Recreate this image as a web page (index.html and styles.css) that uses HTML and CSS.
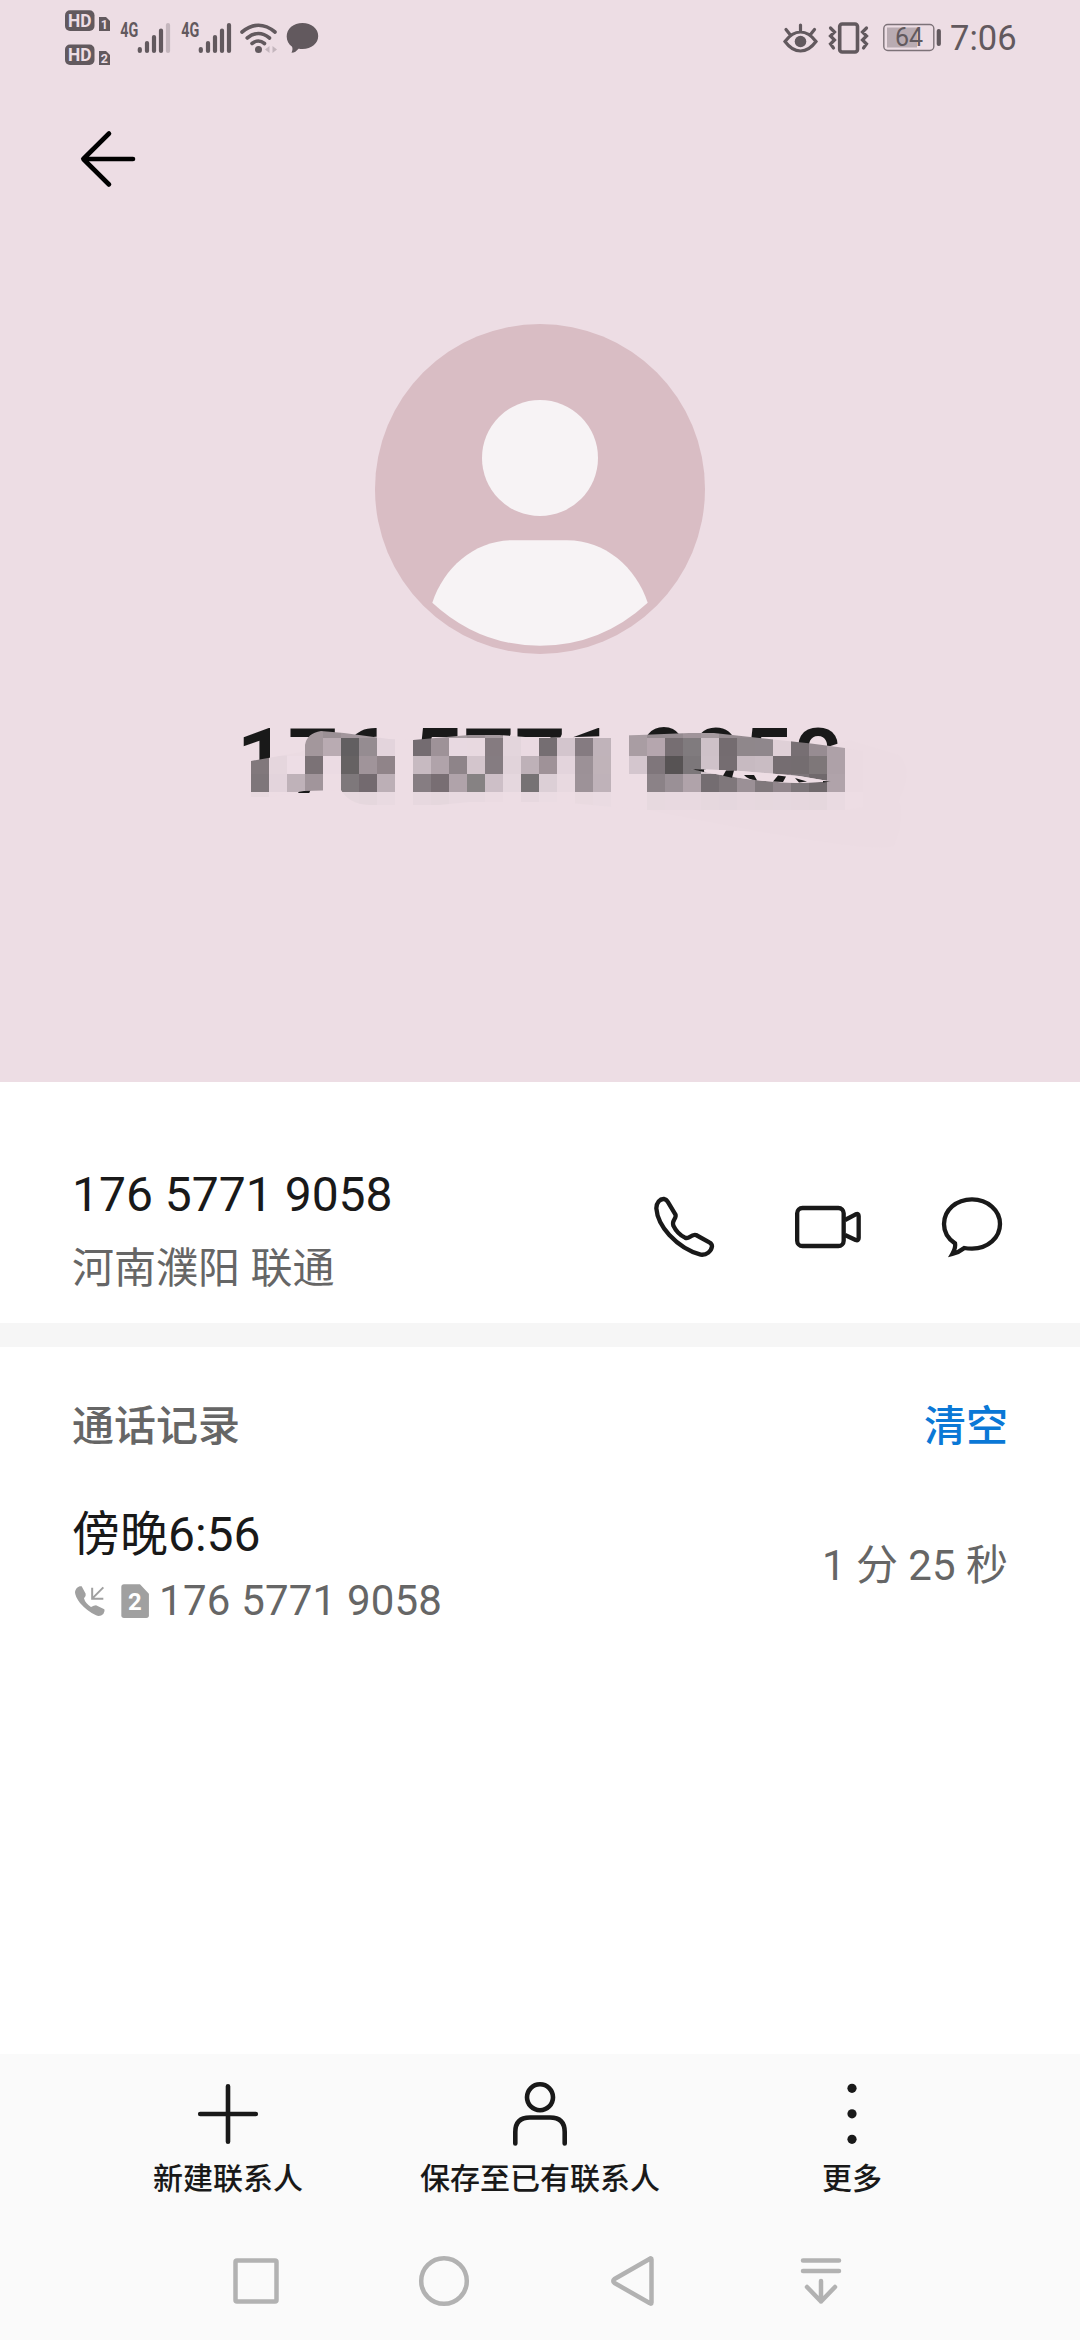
FILE: index.html
```html
<!DOCTYPE html>
<html lang="zh-CN">
<head>
<meta charset="utf-8">
<title>联系人</title>
<link rel="stylesheet" href="styles.css">
</head>
<body>
<div class="screen">
  <header class="hero">
    <div class="status">
      <svg class="hd" viewBox="65 10 46 56" width="46" height="56">
        <g fill="#62595e">
          <rect x="65" y="10.3" width="29.5" height="20.7" rx="5"/>
          <rect x="65" y="44.5" width="29.5" height="20.5" rx="5"/>
          <path d="M99 17h7l4 4v10H99zM99 51h7l4 4v10H99z"/>
        </g>
        <g class="hd-text">
          <text x="68" y="27" textLength="23.5" lengthAdjust="spacingAndGlyphs">HD</text>
          <text x="68" y="61.2" textLength="23.5" lengthAdjust="spacingAndGlyphs">HD</text>
        </g>
        <g class="hd-num"><text x="104.3" y="28.6">1</text><text x="104.3" y="62.8">2</text></g>
      </svg>
      <svg class="signal" viewBox="120 14 52 46" width="52" height="46">
        <text class="net" x="120.3" y="35.8" textLength="18" lengthAdjust="spacingAndGlyphs">4G</text>
        <g class="bars"><path d="M139.8 48v2M147 42v8M154 36v14M161 29.500v20.500"/><path class="off" d="M168 24v26"/></g>
      </svg>
      <svg class="signal" viewBox="120 14 52 46" width="52" height="46">
        <text class="net" x="120.3" y="35.8" textLength="18" lengthAdjust="spacingAndGlyphs">4G</text>
        <g class="bars"><path d="M139.8 48v2M147 42v8M154 36v14M161 29.500v20.500M168 24v26"/></g>
      </svg>
      <svg class="wifi" viewBox="239 20 40 34" width="40" height="34">
        <g fill="none" stroke="#62595e" stroke-width="3.600" stroke-linecap="round"><path d="M242 31Q258.500 17.500 275 31M247.200 37Q258.500 28 269.500 37M252 42.500Q258.500 37.500 264.500 42.500"/></g>
        <circle cx="258.500" cy="48.600" r="3.500" fill="#62595e"/>
        <path d="M269.500 45v7l-4.500-3.500zM272.500 45v7l4.500-3.500z" fill="#c4b6bd"/>
      </svg>
      <svg class="msg" viewBox="286 22 34 32" width="34" height="32"><path d="M302.500 23c9 0 15.700 5.600 15.700 13S311.500 49 302.500 49c-2 0-2.800-.2-4-.3-2 2.300-3.800 4-7 4.100 1-2 1.300-4 .6-6-3.500-2.300-5.400-6-5.400-10.200C286.700 28.600 293.500 23 302.500 23z" fill="#62595e"/></svg>
      <svg class="eye" viewBox="783 21 36 32" width="36" height="32">
        <g fill="none" stroke="#62595e" stroke-width="3.200" stroke-linecap="round"><path d="M785 40.500Q792 31 800.500 31T816 40.500Q809 50 800.500 50T785 40.500zM800.500 24v6M786 28.500l4 5M814.500 28.500l-4 5"/></g>
        <circle cx="800.500" cy="40.500" r="5.800" fill="#62595e"/>
      </svg>
      <svg class="vibe" viewBox="828 20 42 34" width="42" height="34">
        <g fill="none" stroke="#62595e"><rect x="839.700" y="23" width="17.800" height="28" rx="2.500" stroke-width="3.600"/><path d="M830.500 27l4 4-4 4 4 4-4 4 3 4M866.500 27l-4 4 4 4-4 4 4 4-3 4" stroke-width="3.200" stroke-linecap="round"/></g>
      </svg>
      <svg class="battery" viewBox="882 17 60 42" width="60" height="42">
        <rect x="883.800" y="24.500" width="50" height="26" rx="4" fill="none" stroke="#7d7278" stroke-width="1.400"/>
        <rect x="887" y="27.500" width="30" height="20" fill="#b9abb2"/>
        <rect x="936.700" y="29" width="4.200" height="17" rx="2" fill="#62595e"/>
        <text x="909" y="46" class="battery-text">64</text>
      </svg>
      <span class="clock">7:06</span>
    </div>

    <svg class="back" viewBox="76 127 64 64" width="64" height="64"><path d="M109 133.500L83.300 159 109 184.500M84 159h49"/></svg>

    <svg class="avatar" viewBox="375 324 330 330" width="330" height="330">
      <circle cx="540" cy="489" r="165" fill="#d9bdc4"/>
      <circle cx="540" cy="458" r="58" fill="#f7f3f5"/>
      <path d="M432.300 602.700C444 567 475 540.200 513 540.200H567C605 540.200 636 567 647.700 602.700Q601 645.700 540 645.700T432.300 602.700z" fill="#f7f3f5"/>
    </svg>

    <div class="name">
      <span>176 5771 9058</span>
      <svg class="mosaic" viewBox="230 710 700 130" width="700" height="130">
        <defs>
          <clipPath id="brush"><path clip-rule="evenodd" d="M238 775Q240 763 252 761L300 752.500 306 750V745Q308 733 322 731L345 733 390 739 414 740 470 735H500L540 738 577 737 640 735 690 733H715L770 739 812 743.500 846 748 870 752Q912 758 912 785T870 806L846 810H648L560 802H470L440 805H370Q350 804 342 790L305 791 270 797H252zM692 769L735 770.500 800 776 832 781.500 800 783Q750 782 692 769z"/></clipPath>
        </defs>
        <path d="M640 808L850 740 900 755Q915 770 900 800 906 820 895 846Q870 855 640 808z" fill="#ecdce3"/>
        <g id="cells" clip-path="url(#brush)"></g>
        <path d="M692 769L735 770.500 800 776 832 781.500 800 783Q750 782 692 769z" fill="#eddde4"/>
        <path d="M692 769l13 .5V772zM727 770.500h8l-2 7.200-9-2zM745 775h10l3 5.200q-9-.2-13-5.200zM779 775.500l8 1-3 5.500-10-.5zM796 778l12 3.500-8 1-4-4.500zM824 781l8 .5-8 1z" fill="#191919"/>
      </svg>
    </div>
  </header>

  <section class="number">
    <div>
      <div class="primary">176 5771 9058</div>
      <div class="secondary place">河南濮阳 联通</div>
    </div>
    <div class="actions">
      <svg viewBox="54 63 216 216" width="72" height="72"><path d="M79 115C79 98 90 86 102 87Q109 88 113 95L136 133Q139 139 133 148 127 157 130 167 142 192 165 203 172 206 179 201 190 193 198 195L238 217Q246 221 246 229C244 244 230 256 212 254Q160 240 118 195 82 155 79 115z"/></svg>
      <svg viewBox="486 63 216 216" width="72" height="72"><rect x="501.500" y="114" width="139.500" height="114" rx="16"/><path d="M645 150L677 133Q686 129 686 138V204Q686 213 677 210L645 195"/></svg>
      <svg viewBox="918 63 216 216" width="72" height="72"><path stroke-linejoin="miter" d="M1003 234Q1012 236 1026 236C1074 236 1110 203 1110 162S1073 88 1026 88 942 120 942 162C942 187 955 207 975 220Q978 233 967 252 985 248 1003 234z"/></svg>
    </div>
  </section>

  <section class="log">
    <div class="log-head"><span>通话记录</span><span class="clear">清空</span></div>
    <div class="call">
      <div>
        <div class="primary when">傍晚6:56</div>
        <div class="secondary detail">
          <svg viewBox="66 810 108 108" width="36" height="36"><path d="M75 838C76 826 86 818 95 820L107 842Q109 848 102 856 105 870 123 882 132 878 138 877L163 889Q166 895 160 903 150 912 138 907 112 895 90 870 75 850 75 838z" fill="#a0a0a0"/><path d="M126.500 824V857H160M127 856L160 823" fill="none" stroke="#a0a0a0" stroke-width="6"/></svg>
          <svg class="sim" viewBox="213 812 86 104" width="28.600" height="34.600"><path d="M222 813H270L297 841V906Q297 914 289 914H222Q214 914 214 906V821Q214 813 222 813z" fill="#a0a0a0"/><text x="255" y="890">2</text></svg>
          <span>176 5771 9058</span>
        </div>
      </div>
      <div class="secondary duration">1 分 25 秒</div>
    </div>
  </section>

  <footer class="bottom">
    <nav class="tools">
      <div class="tool"><svg viewBox="0 0 72 72" width="72" height="72"><path d="M36 8.200V63.800M8.200 36H63.800"/></svg><span>新建联系人</span></div>
      <div class="tool"><svg viewBox="0 0 72 72" width="72" height="72"><circle cx="36" cy="19.300" r="13"/><path d="M11.300 65.500V54Q11.300 39.500 26 39.500H46Q60.700 39.500 60.700 54V65.500"/></svg><span>保存至已有联系人</span></div>
      <div class="tool"><svg viewBox="0 0 72 72" width="72" height="72"><g fill="#191919" stroke="none"><circle cx="36" cy="10.300" r="4.600"/><circle cx="36" cy="35.800" r="4.600"/><circle cx="36" cy="61.300" r="4.600"/></g></svg><span>更多</span></div>
    </nav>
    <nav class="keys">
      <svg viewBox="-30 -30 60 60" width="60" height="60"><rect x="-20.500" y="-20.500" width="41" height="41" rx="1.500"/></svg>
      <svg viewBox="-30 -30 60 60" width="60" height="60"><circle r="22.800"/></svg>
      <svg viewBox="-30 -30 60 60" width="60" height="60"><path d="M18.500-21.500V21.500Q18.500 23.500 16.500 22L-18.500 2Q-21 0-18.500-2L16.500-22Q18.500-23.500 18.500-21.500z"/></svg>
      <svg viewBox="-30 -30 60 60" width="60" height="60"><path d="M-18-20.500H18M-18-10H18M0 0V20.500M-14 6L0 20.500 14 6"/></svg>
    </nav>
  </footer>
</div>
<script src="mosaic.js"></script>
</body>
</html>
```
FILE: styles.css
```css
* { box-sizing: border-box; }
body { margin: 0; background: #fff; font-family: Roboto, "Noto Sans CJK SC", sans-serif; color: #191919; }
svg { display: block; flex: none; overflow: visible; }
.screen { width: 1080px; height: 2340px; display: flex; flex-direction: column; overflow: hidden; }

.hero { height: 1082px; background: #eddde4; display: flex; flex-direction: column; align-items: center; }
.status { width: 100%; height: 75px; padding-left: 65px; display: flex; align-items: center; }
.hd { margin-right: 9px; }
.signal { margin-right: 9px; }
.wifi { margin: 0 7px 0 -3px; }
.msg { margin-right: auto; }
.eye { margin-right: 9px; }
.vibe { margin-right: 12px; }
.battery { margin-right: 8px; }
.clock { width: 130px; font: 34.5px/40px Roboto, sans-serif; color: #62595e; }
.hd-text { font: 700 19px Roboto, sans-serif; fill: #eddde4; }
.hd-num { font: 700 12.5px Roboto, sans-serif; fill: #eddde4; text-anchor: middle; }
.net { font: 700 19.5px Roboto, sans-serif; fill: #62595e; }
.bars { fill: none; stroke: #62595e; stroke-width: 4.2; stroke-linecap: round; }
.bars .off { stroke: #c4b6bd; }
.battery-text { font: 25px Roboto, sans-serif; fill: #62595e; text-anchor: middle; }

.back { align-self: flex-start; margin: 52px 0 0 76px; fill: none; stroke: #000; stroke-width: 4.6; stroke-linecap: round; stroke-linejoin: round; }
.avatar { margin-top: 133px; }
.name { position: relative; margin-top: 56px; font-size: 90px; line-height: 106px; font-weight: 500; white-space: nowrap; }
.mosaic { position: absolute; left: -7px; top: 0; }

.number { height: 241px; padding: 74px 72px 0; display: flex; justify-content: space-between; align-items: flex-start; }
.primary { font-size: 48px; line-height: 78px; white-space: nowrap; }
.secondary { font-size: 42px; line-height: 60px; color: #666; white-space: nowrap; }
.place { margin-top: 5px; }
.actions { display: flex; gap: 72px; padding-top: 35px; }
.actions svg { fill: none; stroke: #191919; stroke-width: 13; stroke-linejoin: round; }

.log { flex: 1; border-top: 24px solid #f6f6f6; padding: 50px 72px 0; }
.log-head { display: flex; justify-content: space-between; font-size: 42px; line-height: 60px; font-weight: 500; color: #666; }
.clear { color: #0a78d6; }
.call { display: flex; justify-content: space-between; align-items: center; margin-top: 39px; }
.detail { display: flex; align-items: center; margin-top: -3px; letter-spacing: 0.2px; }
.duration { padding-top: 5px; }
.sim { margin: 0 9.500px 0 13px; }
.sim text { font: 700 72px Roboto, sans-serif; fill: #fff; text-anchor: middle; }

.bottom { height: 286px; background: #fafafa; }
.tools { display: flex; padding: 24px 72px 0; }
.tool { flex: 1; display: flex; flex-direction: column; align-items: center; font-size: 30px; line-height: 44px; font-weight: 500; }
.tool svg { fill: none; stroke: #191919; stroke-width: 4.600; stroke-linecap: round; }
.tool span { margin-top: 7px; }
.keys { display: flex; justify-content: space-between; padding: 0 229px 0 226px; margin-top: 50px; }
.keys svg { fill: none; stroke: #b2b2b2; stroke-width: 4.500; stroke-linecap: round; stroke-linejoin: round; }
```
FILE: mosaic.js
```js
// Colour rows of the pixelated strip over the contact name; "-" is an empty block.
const rows = [
  "- - - a3979c 9b9095 a2969c a3989d e3d4dc - a59a9f a59a9f a59a9f 9b9095 a59a9f e3d5dc - e3d5dc - - - - a99da3 958b90 958b90 a0949a a59a9f 958b90 958b90 958b90 - - - - -",
  "e8d9e0 e8d9e0 ebdbe2 a3979c b9abb2 625f61 958c91 e3d4dc - 746c71 9e9298 e8d9e1 e8d9e0 857b80 e3d5dc eadae2 756e72 d3c5cd 857b81 c0b3ba - a99da3 b5a6ae 766e72 807b7e cec1c8 746c70 8f878b 8f878c dfd0d7 776f73 978c92 aea1a8 ebdbe2",
  "81787c e5d6dd eddde5 7b7276 ebdbe3 666263 a0949a 908489 - c7bac1 b0a3aa 8e8489 d3c5cc 857c81 e1d3da beb1b8 9f9298 e3d4dc 9c9197 c0b3b9 - d4c6ce 7f767b 575354 7c777a cfc2c9 756d71 c7bac1 c9bcc3 756d71 746d70 7e7779 aea1a8 ebdbe2",
  "7e767a e3d4dc bfb2b9 a1959b - 7e787b 736a6f bcafb6 - 867d82 786e73 b0a3aa 868283 cdbfc7 e5d7de 767274 dccfd6 e8d9e0 9d9298 bfb2b9 - - 8b8287 9a9096 b0a3aa 746d71 7f777b 9b9096 80787c 91868c 7c7579 70696c b0a3aa ebdbe2",
  "e8d9df - - - - e6d8de e5d7dd e9dae1 - e7d8df e5d7dd e8d9e0 e8d9e0 ebdbe2 - e7d8df ebdce3 - e9dae0 eadbe2 - - e7d9df e8d9e0 e8d9e0 e6d8de e5d7de e7d8df e6d8de e6d8df e6d7de e5d7dd e9dae1 -"
];
const size = 18, left = 252, top0 = 720;
const layer = document.getElementById("cells");
rows.forEach((row, y) => row.split(" ").forEach((color, x) => {
  const cell = document.createElementNS("http://www.w3.org/2000/svg", "rect");
  cell.setAttribute("x", left + x * size);
  cell.setAttribute("y", top0 + y * size);
  cell.setAttribute("width", size);
  cell.setAttribute("height", size);
  cell.setAttribute("fill", color === "-" ? "#eddde4" : "#" + color);
  cell.setAttribute("shape-rendering", "crispEdges");
  layer.appendChild(cell);
}));
```
